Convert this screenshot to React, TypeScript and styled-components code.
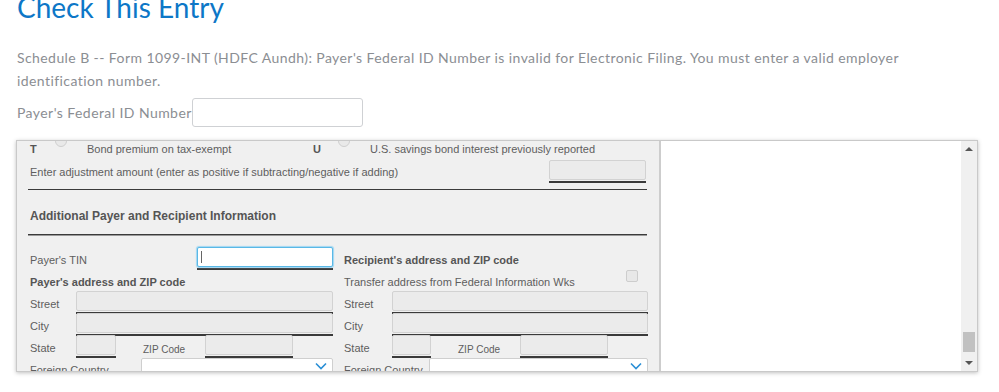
import { createGlobalStyle, styled } from 'styled-components';

const GlobalStyle = createGlobalStyle`
  html, body {
    margin: 0;
    padding: 0;
    background: #ffffff;
    overflow: hidden;
  }
`;

const Page = styled.div`
  width: 999px;
  height: 392px;
  padding-left: 16px;
  box-sizing: border-box;
  font-family: Lato, "Open Sans", sans-serif;
`;

const Title = styled.h1`
  margin: -7px 0 0 1px;
  font-size: 28px;
  line-height: 28px;
  font-weight: 400;
  color: #0d77c7;
`;

const Message = styled.p`
  margin: 25px 0 0 1px;
  width: 900px;
  font-size: 14px;
  line-height: 23px;
  letter-spacing: 0.42px;
  color: #8b8e93;
`;

const IdRow = styled.div`
  display: flex;
  align-items: center;
  margin: 6px 0 0 1px;
  font-size: 14px;
  color: #8b8e93;
  letter-spacing: 0.43px;
`;

const IdInput = styled.input`
  width: 171px;
  height: 29px;
  box-sizing: border-box;
  border: 1px solid #cfd1d4;
  border-radius: 3px;
  background: #fff;
`;

const Frame = styled.div`
  display: flex;
  margin-top: 13px;
  width: 962px;
  height: 232px;
  box-sizing: border-box;
  border: 1px solid #c9c9c9;
  box-shadow: 0 1px 4px rgba(0, 0, 0, 0.25);
  font-family: "Liberation Sans", Arial, sans-serif;
  font-size: 11px;
  color: #5e5e5e;
`;

const FormPane = styled.div`
  width: 644px;
  height: 100%;
  overflow: hidden;
  background: #f0f0f0;
  padding: 0 12px 0 11px;
  box-sizing: border-box;
  border-right: 2px solid #cdcdcd;
`;

const PreviewPane = styled.div`
  flex: 1;
  background: #ffffff;
`;

const Scrollbar = styled.div`
  position: relative;
  width: 16px;
  background: #f0f0f0;
`;

const Arrow = styled.div<{ $down?: boolean }>`
  position: absolute;
  left: 4px;
  ${({ $down }) => ($down ? 'bottom: 6px;' : 'top: 6px;')}
  width: 0;
  height: 0;
  border-left: 4px solid transparent;
  border-right: 4px solid transparent;
  ${({ $down }) =>
    $down ? 'border-top: 4px solid #555;' : 'border-bottom: 4px solid #555;'}
`;

const Thumb = styled.div`
  position: absolute;
  left: 2px;
  top: 191px;
  width: 12px;
  height: 20px;
  background: #c1c1c1;
`;

const Row = styled.div<{ $h?: number; $top?: number }>`
  display: flex;
  align-items: center;
  height: ${({ $h }) => $h ?? 22}px;
  margin-top: ${({ $top }) => $top ?? 0}px;
  padding: 0 1px 0 2px;
`;

const OptionGroup = styled.div`
  display: flex;
  align-items: flex-start;
  width: 283px;
  height: 16px;
  white-space: nowrap;
`;

const Letter = styled.span`
  width: 25px;
  font-weight: 700;
  line-height: 16px;
  color: #555;
`;

const Radio = styled.span`
  width: 10px;
  height: 10px;
  margin: -6px 20px 0 0;
  border: 1px solid #cfcfcf;
  border-radius: 50%;
  background: #e9e9e9;
`;

const OptionText = styled.span`
  line-height: 16px;
`;

const Label = styled.span<{ $w?: number }>`
  flex: none;
  width: ${({ $w }) => ($w ? `${$w}px` : 'auto')};
  margin-top: 6px;
  line-height: 14px;
  white-space: nowrap;
`;

const SmallLabel = styled.span<{ $w: number }>`
  flex: none;
  width: ${({ $w }) => $w}px;
  margin-top: 8px;
  line-height: 14px;
  font-size: 10px;
`;

const Field = styled.div<{ $w: number; $push?: boolean }>`
  flex: none;
  width: ${({ $w }) => $w}px;
  margin-left: ${({ $push }) => ($push ? 'auto' : '0')};
  padding-bottom: 1px;
  border-bottom: 2px solid #3a3a3a;
`;

const Box = styled.div<{ $focus?: boolean }>`
  height: 20px;
  box-sizing: border-box;
  border: 1px solid ${({ $focus }) => ($focus ? '#5ab8e6' : '#d2d2d2')};
  box-shadow: ${({ $focus }) => ($focus ? '0 0 1px 1px #9fd6f2' : 'none')};
  border-radius: 2px;
  background: ${({ $focus }) => ($focus ? '#ffffff' : '#ebebeb')};
  padding: 3px 0 0 3px;
`;

const Caret = styled.div`
  width: 1px;
  height: 12px;
  background: #666;
`;

const Rule = styled.div<{ $top: number; $double?: boolean }>`
  margin-top: ${({ $top }) => $top}px;
  height: 1px;
  background: #3b3b3b;
  box-shadow: ${({ $double }) => ($double ? '0 1px 0 #9a9a9a' : 'none')};
`;

const SectionTitle = styled.div`
  margin-top: 16px;
  padding-left: 2px;
  height: 20px;
  line-height: 20px;
  font-size: 12px;
  font-weight: 700;
  color: #555;
`;

const Columns = styled.div`
  display: grid;
  grid-template-columns: 303px 304px;
  column-gap: 11px;
  margin-top: 12px;
  padding-left: 2px;
`;

const Column = styled.div`
  display: flex;
  flex-direction: column;
`;

const ColRow = styled.div`
  display: flex;
  align-items: flex-start;
  height: 22px;
`;

const Bold = styled(Label)`
  font-weight: 700;
  color: #555;
`;

const Check = styled.span`
  margin: 1px 10px 0 auto;
  width: 10px;
  height: 10px;
  border: 1px solid #cdcdcd;
  border-radius: 2px;
  background: #e8e8e8;
`;

const Select = styled.div<{ $w: number }>`
  display: flex;
  justify-content: flex-end;
  margin: 1px 0 0 auto;
  width: ${({ $w }) => $w}px;
  height: 22px;
  box-sizing: border-box;
  border: 1px solid #cfcfcf;
  border-radius: 2px;
  background: #fff;
  padding: 3px 5px 0 0;
`;

const FooterRule = styled.div`
  margin-top: 14px;
  width: 962px;
  height: 1px;
  background: #ececec;
`;

const Chevron = () => (
  <svg width="12" height="8" viewBox="0 0 12 8">
    <path d="M1 1.5 L6 6.5 L11 1.5" fill="none" stroke="#2a8fd6" strokeWidth="1.6" />
  </svg>
);

type AddressProps = {
  labelW: number;
  lineW: number;
  stateW: number;
  zipW: number;
  countryW: number;
};

const AddressRows = ({ labelW, lineW, stateW, zipW, countryW }: AddressProps) => (
  <>
    <ColRow>
      <Label $w={labelW}>Street</Label>
      <Field $w={lineW}>
        <Box />
      </Field>
    </ColRow>
    <ColRow>
      <Label $w={labelW}>City</Label>
      <Field $w={lineW}>
        <Box />
      </Field>
    </ColRow>
    <ColRow>
      <Label $w={labelW}>State</Label>
      <Field $w={stateW}>
        <Box />
      </Field>
      <Label $w={27} />
      <SmallLabel $w={62}>ZIP Code</SmallLabel>
      <Field $w={zipW}>
        <Box />
      </Field>
    </ColRow>
    <ColRow>
      <Label>Foreign Country</Label>
      <Select $w={countryW}>
        <Chevron />
      </Select>
    </ColRow>
  </>
);

export default function App() {
  return (
    <>
      <GlobalStyle />
      <Page>
        <Title>Check This Entry</Title>
        <Message>
          Schedule B -- Form 1099-INT (HDFC Aundh): Payer's Federal ID Number is invalid for
          Electronic Filing. You must enter a valid employer identification number.
        </Message>
        <IdRow>
          Payer's Federal ID Number
          <IdInput />
        </IdRow>

        <Frame>
          <FormPane>
            <Row $h={16}>
              <OptionGroup>
                <Letter>T</Letter>
                <Radio />
                <OptionText>Bond premium on tax-exempt</OptionText>
              </OptionGroup>
              <OptionGroup>
                <Letter>U</Letter>
                <Radio />
                <OptionText>U.S. savings bond interest previously reported</OptionText>
              </OptionGroup>
            </Row>
            <Row $h={23} $top={3}>
              <span>Enter adjustment amount (enter as positive if subtracting/negative if adding)</span>
              <Field $w={97} $push>
                <Box />
              </Field>
            </Row>
            <Rule $top={6} />
            <SectionTitle>Additional Payer and Recipient Information</SectionTitle>
            <Rule $top={8} $double />

            <Columns>
              <Column>
                <ColRow>
                  <Label $w={167}>Payer's TIN</Label>
                  <Field $w={136}>
                    <Box $focus>
                      <Caret />
                    </Box>
                  </Field>
                </ColRow>
                <ColRow>
                  <Bold>Payer's address and ZIP code</Bold>
                </ColRow>
                <AddressRows labelW={46} lineW={257} stateW={40} zipW={88} countryW={192} />
              </Column>
              <Column>
                <ColRow>
                  <Bold>Recipient's address and ZIP code</Bold>
                </ColRow>
                <ColRow>
                  <Label>Transfer address from Federal Information Wks</Label>
                  <Check />
                </ColRow>
                <AddressRows labelW={48} lineW={256} stateW={39} zipW={88} countryW={219} />
              </Column>
            </Columns>
          </FormPane>
          <PreviewPane />
          <Scrollbar>
            <Arrow />
            <Thumb />
            <Arrow $down />
          </Scrollbar>
        </Frame>
        <FooterRule />
      </Page>
    </>
  );
}
